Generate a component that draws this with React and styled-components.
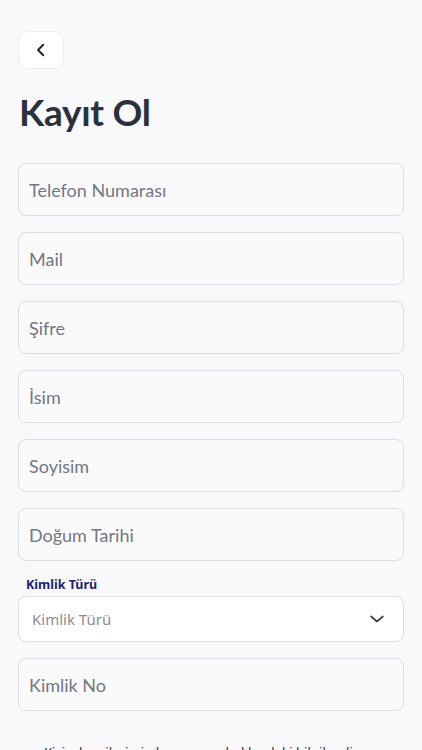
import styled, { createGlobalStyle } from "styled-components";

const GlobalStyle = createGlobalStyle`
  html, body {
    margin: 0;
    padding: 0;
    background: #f9f9fb;
  }
  body {
    font-family: Lato, "Noto Sans", sans-serif;
  }
`;

const fields = [
  "Telefon Numarası",
  "Mail",
  "Şifre",
  "İsim",
  "Soyisim",
  "Doğum Tarihi",
];

export default function App() {
  return (
    <>
      <GlobalStyle />
      <Page>
        <BackButton aria-label="Geri">
          <svg width="18" height="18" viewBox="0 0 24 24" fill="none">
            <path
              d="M15 5l-7 7 7 7"
              stroke="#1c1f26"
              strokeWidth="2.4"
              strokeLinecap="round"
              strokeLinejoin="round"
            />
          </svg>
        </BackButton>

        <Title>Kayıt Ol</Title>

        <Form>
          {fields.map((f) => (
            <Field key={f}>
              <Input placeholder={f} />
            </Field>
          ))}

          <SelectGroup>
            <Label>Kimlik Türü</Label>
            <Select>
              <span>Kimlik Türü</span>
              <svg width="20" height="20" viewBox="0 0 24 24" fill="none">
                <path
                  d="M5 9l7 6 7-6"
                  stroke="#3a3d45"
                  strokeWidth="2"
                  strokeLinecap="round"
                  strokeLinejoin="round"
                />
              </svg>
            </Select>
          </SelectGroup>

          <Field>
            <Input placeholder="Kimlik No" />
          </Field>
        </Form>

        <Consent>
          Kişisel verilerimin korunması hakkındaki bilgilendirme metnini
          okudum ve kabul ediyorum.
        </Consent>
      </Page>
    </>
  );
}

const Page = styled.div`
  width: 100%;
  height: 750px;
  overflow: hidden;
  box-sizing: border-box;
  padding: 31px 18px 0 18px;
`;

const BackButton = styled.button`
  display: flex;
  align-items: center;
  justify-content: center;
  width: 46px;
  height: 38px;
  padding: 0;
  background: #ffffff;
  border: 1px solid #eeeff3;
  border-radius: 10px;
  cursor: pointer;
`;

const Title = styled.h1`
  margin: 20px 0 0 1px;
  font-family: Lato, "Noto Sans", sans-serif;
  font-size: 37px;
  font-weight: 700;
  line-height: 46px;
  color: #2b313c;
  letter-spacing: -0.3px;
`;

const Form = styled.div`
  display: flex;
  flex-direction: column;
  gap: 16px;
  margin-top: 28px;
`;

const Field = styled.div`
  display: flex;
`;

const Input = styled.input`
  width: 100%;
  height: 53px;
  box-sizing: border-box;
  padding: 0 10px;
  border: 1.5px solid #dcdde3;
  border-radius: 8px;
  background: #fafafb;
  font-family: Lato, "Noto Sans", sans-serif;
  font-size: 18px;
  color: #2b313c;
  outline: none;

  &::placeholder {
    color: #737782;
  }
`;

const SelectGroup = styled.div`
  display: flex;
  flex-direction: column;
  gap: 3px;
`;

const Label = styled.div`
  margin-left: 8px;
  font-family: "Noto Sans", sans-serif;
  font-size: 12.5px;
  font-weight: 700;
  color: #1b2170;
  line-height: 16px;
`;

const Select = styled.div`
  display: flex;
  align-items: center;
  justify-content: space-between;
  height: 46px;
  box-sizing: border-box;
  padding: 0 16px 0 13px;
  background: #ffffff;
  border: 1.5px solid #dcdde3;
  border-radius: 8px;
  font-family: "Noto Sans", sans-serif;
  font-size: 15px;
  color: #8a8d94;
`;

const Consent = styled.p`
  margin: 31px 0 0 0;
  padding: 0 8px;
  text-align: center;
  font-family: "Noto Sans", sans-serif;
  font-size: 13.2px;
  line-height: 20px;
  color: #2b313c;
`;
